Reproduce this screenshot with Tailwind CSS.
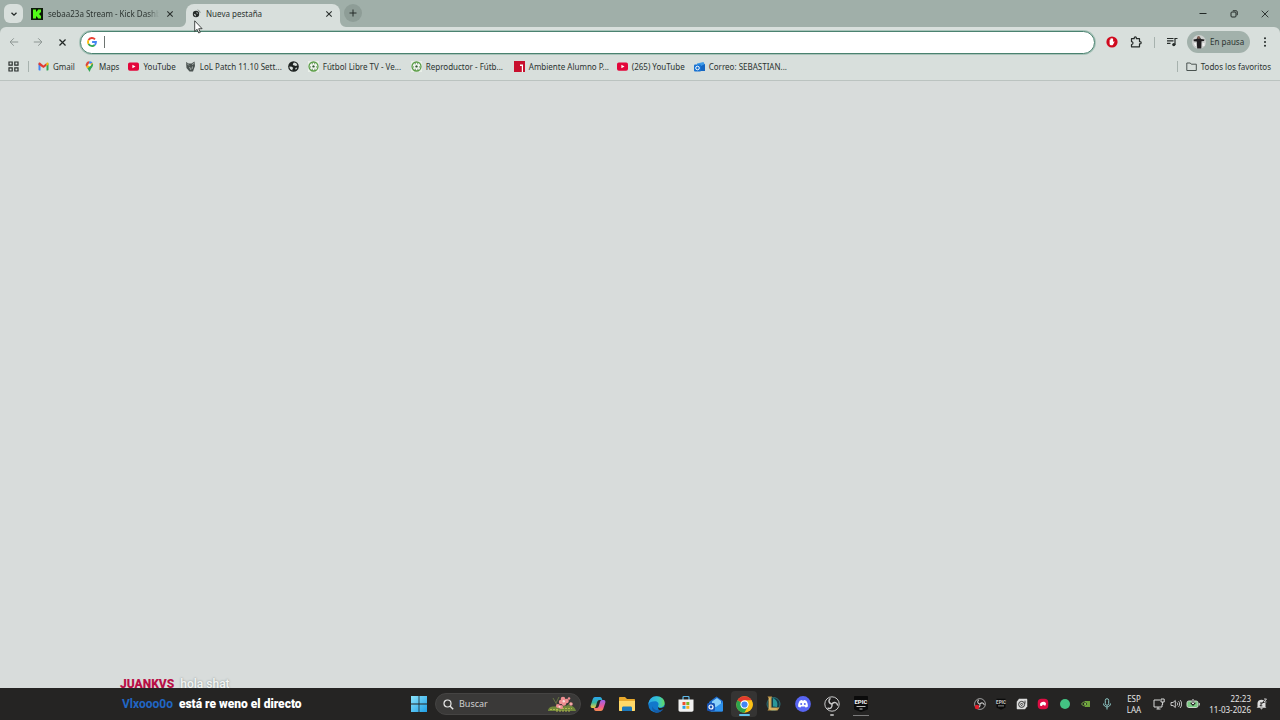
<!DOCTYPE html>
<html lang="es">

<head>
  <meta charset="UTF-8" />
  <meta name="viewport" content="width=device-width, initial-scale=1.0" />
  <script src="https://cdn.jsdelivr.net/npm/@tailwindcss/browser@4"></script>
  <title>Nueva pestaña</title>
</head>

<body class="flex h-screen flex-col overflow-hidden bg-[#d8dcdb] font-['Noto_Sans',sans-serif] text-[8px] leading-3 text-[#2c3431]">

  <!-- shared icons -->
  <svg class="hidden">
    <symbol id="close" viewBox="0 0 8 8"><path d="M1.3 1.3l5.4 5.4M6.7 1.3L1.3 6.7" stroke="currentColor" stroke-width="1.1" fill="none" /></symbol>
    <symbol id="youtube" viewBox="0 0 12 12"><rect x="0" y="1.500" width="12" height="9" rx="2" fill="#e3063a" /><path d="M4.800 4v4L8.200 6z" fill="#fff" /></symbol>
    <symbol id="ball" viewBox="0 0 12 12">
      <rect width="12" height="12" fill="#e9efe9" />
      <circle cx="6" cy="6" r="4.900" fill="#f4f8f2" stroke="#5a9c46" stroke-width="1.400" />
      <path d="M6 4.500l1.400 1-.5 1.700H5.100l-.5-1.700z" fill="#2f5a2c" />
      <path d="M4.200 3h1M6.800 3h1M2.800 6v1M9.200 6v1M4.200 9h1M7 9h1" stroke="#2f5a2c" stroke-width="1" />
    </symbol>
    <symbol id="globe" viewBox="0 0 12 12">
      <circle cx="6" cy="6" r="5.800" fill="#1e2321" />
      <path d="M1.500 6l2.700.200 1.600 1.300-.900 1.300-.200 1.500C2.700 9.600 1.500 8 1.500 6zM6.500 1.500c2 .2 3.300 1.300 3.800 3L8.500 5.500 7 4.800 5.200 4.300 5.800 2.500zM8 7.500l2-.500c-.2 1.200-.8 2-1.700 2.500z" fill="#d8dfdc" />
    </symbol>
    <symbol id="obs" viewBox="0 0 16 16">
      <circle cx="8" cy="8" r="7.200" fill="#201f1f" stroke="#c9c9c9" stroke-width="1" />
      <path d="M7.500 8C4.800 7.300 4.200 4.500 6 2.700M8.300 7.600c2-2 4.700-1 5.200 1.300M8 8.500c.5 2.700-1.500 4.500-4 3.800" stroke="#c9c9c9" stroke-width="1.500" fill="none" stroke-linecap="round" />
    </symbol>
  </svg>

  <!-- tab strip -->
  <header class="bg-[#a0afa9]">
    <div class="flex h-[27px] items-start">
      <button aria-label="Buscar pestañas" class="mt-1 ml-1 flex h-[19px] w-[19px] items-center justify-center rounded-md bg-[#d8dfdc]">
        <svg class="h-2 w-2" viewBox="0 0 8 8"><path d="M1.500 2.800L4 5.200l2.500-2.400" stroke="#222826" stroke-width="1.300" fill="none" /></svg>
      </button>
      <div class="mt-1 flex h-[19px] w-[163px] items-center pl-2">
        <svg class="h-3 w-3 shrink-0" viewBox="0 0 12 12"><rect width="12" height="12" fill="#0c1a08" /><path d="M2 1.500h3v2h1v-1h1v-1h3v3H9v1H8v1h1v1h1v3H7v-1H6v-1H5v2H2z" fill="#53fc18" /></svg>
        <a href="#" class="ml-[5px] w-[111px] whitespace-nowrap mask-r-from-90% mask-r-to-100%">sebaa23a Stream - Kick Dashbo</a>
        <button aria-label="Cerrar sebaa23a Stream" class="ml-[7px] text-[#2a302e]"><svg class="h-2 w-2"><use href="#close" /></svg></button>
      </div>
      <div class="relative mt-1 flex h-[23px] w-[154px] items-center rounded-t-lg bg-[#d8dfdc] pb-1 pl-[6px]">
        <svg class="absolute bottom-0 -left-[6px] h-[6px] w-[6px]" viewBox="0 0 6 6"><path d="M6 0v6H0a6 6 0 0 0 6-6z" fill="#d8dfdc" /></svg>
        <svg class="absolute -right-[6px] bottom-0 h-[6px] w-[6px]" viewBox="0 0 6 6"><path d="M0 0v6h6a6 6 0 0 1-6-6z" fill="#d8dfdc" /></svg>
        <svg class="h-[9px] w-[9px]" viewBox="0 0 9 9"><circle cx="4" cy="5" r="3.200" fill="#252b29" /><path d="M1.800 4.800l1.600.400.500 1.200L3.200 7.500zM4.300 3l1.700.900-1 1z" fill="#d8dfdc" /><path d="M5.500.800A3.500 3.500 0 0 1 8.200 4" stroke="#75807c" stroke-width=".8" fill="none" /></svg>
        <a href="#" class="ml-[5px] flex-1 whitespace-nowrap">Nueva pestaña</a>
        <button aria-label="Cerrar Nueva pestaña" class="mr-[7px] text-[#2a302e]"><svg class="h-2 w-2"><use href="#close" /></svg></button>
      </div>
      <button aria-label="Pestaña nueva" class="mt-1 ml-1 flex h-[18px] w-[18px] items-center justify-center rounded-full bg-[#8e9d97]">
        <svg class="h-2 w-2" viewBox="0 0 8 8"><path d="M4 .5v7M.5 4h7" stroke="#252b29" /></svg>
      </button>
      <div class="ml-auto flex h-[27px] items-stretch text-[#222826]">
        <button aria-label="Minimizar" class="flex w-[31px] items-center justify-center"><svg class="h-2 w-2" viewBox="0 0 8 8"><path d="M.5 3.500h7" stroke="currentColor" /></svg></button>
        <button aria-label="Restaurar" class="flex w-[31px] items-center justify-center"><svg class="h-2 w-2" viewBox="0 0 8 8"><rect x="1" y="2" width="5" height="5" rx="1" stroke="currentColor" fill="none" /><path d="M2.800.700H6A1.300 1.300 0 0 1 7.300 2v3.200" stroke="currentColor" stroke-width=".9" fill="none" /></svg></button>
        <button aria-label="Cerrar" class="flex w-[31px] items-center justify-center"><svg class="h-2 w-2" viewBox="0 0 8 8"><path d="M.7.700l6.600 6.600M7.300.700L.7 7.300" stroke="currentColor" stroke-width=".9" /></svg></button>
      </div>
    </div>

    <!-- toolbar -->
    <div class="flex h-[30px] items-center rounded-t-md bg-[#d8dfdc] pl-[2px]">
      <button aria-label="Atrás" class="flex w-6 justify-center text-[#8d9693]"><svg class="h-[10px] w-[10px]" viewBox="0 0 10 10"><path d="M9.200 5H1.200M4.800 1.300L1.100 5l3.700 3.700" stroke="currentColor" fill="none" /></svg></button>
      <button aria-label="Adelante" class="flex w-6 justify-center text-[#8d9693]"><svg class="h-[10px] w-[10px]" viewBox="0 0 10 10"><path d="M.8 5h8M5.200 1.300L8.900 5 5.200 8.700" stroke="currentColor" fill="none" /></svg></button>
      <button aria-label="Detener" class="flex w-6 justify-center text-[#222826]"><svg class="h-[9px] w-[9px]"><use href="#close" /></svg></button>
      <label class="ml-[6px] flex h-[23px] flex-1 items-center rounded-full border border-[#4b8270] bg-white pl-[6px] shadow-[0_0_0_1px_#a9c4ba]">
        <svg class="h-[10px] w-[10px]" viewBox="0 0 10 10" fill="none" stroke-width="1.800">
          <path d="M8 2.300A4 4 0 0 0 1.500 3.100" stroke="#e94235" />
          <path d="M1.500 3.100a4 4 0 0 0 0 3.800" stroke="#fabb05" />
          <path d="M1.500 6.900A4 4 0 0 0 7.700 8" stroke="#34a853" />
          <path d="M7.700 8A4 4 0 0 0 9 5H5.100" stroke="#4285f4" />
        </svg>
        <span class="ml-[7px] h-3 w-px bg-[#6d7471]"></span>
        <input type="text" aria-label="Buscar con Google o escribir una URL" class="h-full flex-1 bg-transparent outline-none" />
      </label>
      <button aria-label="Bloqueador" class="ml-[5px] flex w-6 justify-center"><svg class="h-3 w-3" viewBox="0 0 12 12"><circle cx="6" cy="6" r="5.600" fill="#d00a1e" /><path d="M3.600 4.200c0-.6.800-.6.800 0V3c0-.6.900-.6.900 0v-.4c0-.6.900-.6.900 0V3c0-.6.900-.6.900 0v3.100l.6-.7c.5-.4 1 0 .7.500L7 8.700c-.6.900-3.400.900-3.400-1z" fill="#fff" /></svg></button>
      <button aria-label="Extensiones" class="flex w-6 justify-center"><svg class="h-3 w-3" viewBox="0 0 12 12"><path d="M1.500 2.700h2.700V2a1.100 1.100 0 0 1 2.200 0v.7h3.100v2.900h.6a1.100 1.100 0 0 1 0 2.200h-.6v3H1.500V8.500c2 0 2-2.900 0-2.900z" stroke="#252b29" stroke-width="1.200" fill="none" stroke-linejoin="round" /></svg></button>
      <span class="mr-[5px] ml-[6px] h-[11px] w-px bg-[#a7b2ae]"></span>
      <button aria-label="Controlar multimedia" class="flex w-6 justify-center"><svg class="h-3 w-3" viewBox="0 0 12 12"><path d="M1 2.500h6.500M1 4.900h6.500M1 7.300h3.500M9 9V2.500h2.500" stroke="#252b29" stroke-width="1.200" fill="none" /><circle cx="7.800" cy="8.600" r="1.600" fill="#252b29" /></svg></button>
      <button class="ml-[3px] flex h-[22px] w-[63px] items-center gap-1 rounded-full bg-[#a2b1ab] pl-[5px] whitespace-nowrap">
        <svg class="h-[14px] w-[14px]" viewBox="0 0 14 14"><circle cx="7" cy="7" r="7" fill="#cdd0ce" /><path d="M1.500 4.500l3-.5 1-1.500h2.500L9 4l3.500.500-.5 1.500-2.500.2-.2 7.300H5.200L4.800 6.500 1.800 6.200z" fill="#201e20" /><circle cx="6.600" cy="2.600" r="1.500" fill="#7b5d52" /><path d="M2 8h2v3H3zM10.500 8h2v3h-2z" fill="#f2f2f1" /></svg>
        En pausa
      </button>
      <button aria-label="Menú" class="flex w-[30px] justify-center"><svg class="h-[10px] w-[10px]" viewBox="0 0 10 10" fill="#222826"><circle cx="5" cy="1.200" r="1" /><circle cx="5" cy="5" r="1" /><circle cx="5" cy="8.800" r="1" /></svg></button>
    </div>

    <!-- bookmarks -->
    <nav class="flex h-6 items-center border-b border-[#bbc3c0] bg-[#d8dfdc] pr-[9px] pb-1 pl-2 whitespace-nowrap">
      <button aria-label="Aplicaciones"><svg class="h-[11px] w-[11px]" viewBox="0 0 11 11" fill="none" stroke="#2a302e" stroke-width="1.200"><path d="M1 1h3.200v3.200H1zM6.800 1H10v3.200H6.800zM1 6.800h3.200V10H1zM6.800 6.800H10V10H6.800z" /></svg></button>
      <span class="ml-[9px] h-[11px] w-px bg-[#a7b2ae]"></span>
      <div class="ml-[9px] flex flex-1 items-center gap-[9px]">
        <a href="#" class="flex items-center gap-1"><svg class="h-[11px] w-[11px]" viewBox="0 0 11 11"><path d="M.5 2.500h2v7H1.300a.8.800 0 0 1-.8-.8z" fill="#4285f4" /><path d="M8.500 2.500h2v6.200a.8.800 0 0 1-.8.800H8.500z" fill="#34a853" /><path d="M.5 2.800c0-1.300 1.200-1.500 2-.8l3 2.400 3-2.400v2.700L5.500 7 .5 3.800z" fill="#e33b30" /><path d="M8.500 2c.8-.7 2-.5 2 .8v.7l-2 1.500z" fill="#fbbc04" /></svg>Gmail</a>
        <a href="#" class="flex items-center gap-1"><svg class="h-[11px] w-[11px]" viewBox="0 0 11 11"><path d="M5.500.3a3.800 3.800 0 0 0-3 1.400L5 4z" fill="#ea4335" /><path d="M5.500.300L4.300 3.500l3.900 0L8.500 1.700A3.800 3.800 0 0 0 5.500.3z" fill="#4285f4" /><path d="M2.500 1.700A3.800 3.800 0 0 0 2.200 6l3-3.300z" fill="#d9483a" /><path d="M2.200 6l1.100 1.400L8.900 2.400l-.4-.7L4 4z" fill="#fbbc04" /><path d="M8.900 2.400C10 5.500 6.500 7 5.900 10.600h-.8C4.900 9.200 4.200 8.400 3.300 7.400z" fill="#34a853" /><circle cx="5.500" cy="3.900" r="1.300" fill="#eef3f1" /></svg>Maps</a>
        <a href="#" class="flex items-center gap-1"><svg class="h-[11px] w-[11px]"><use href="#youtube" /></svg>YouTube</a>
        <a href="#" class="flex items-center gap-1"><svg class="h-[11px] w-[11px]" viewBox="0 0 11 11"><path d="M1 1l2.500 1.500h3L9.500.500 10 5 8 10.500H4.500L1.500 7z" fill="#4b5351" /><path d="M2 2.500l2 2M7 3.500L9 2.500M4.500 6l1.500 3M7.500 5.500L7 8" stroke="#b7c0bd" stroke-width=".8" /></svg><span class="w-[79px]">LoL Patch 11.10 Sett...</span></a>
        <a href="#" aria-label="Sitio web"><svg class="h-[11px] w-[11px]"><use href="#globe" /></svg></a>
        <a href="#" class="flex items-center gap-1"><svg class="h-[11px] w-[11px]"><use href="#ball" /></svg><span class="w-[79px]">Fútbol Libre TV - Ve...</span></a>
        <a href="#" class="flex items-center gap-1"><svg class="h-[11px] w-[11px]"><use href="#ball" /></svg><span class="w-[79px]">Reproductor - Fútb...</span></a>
        <a href="#" class="flex items-center gap-1"><svg class="h-[11px] w-[11px]" viewBox="0 0 11 11"><rect width="11" height="11" fill="#c8102e" /><path d="M6 3.500h3V11H7.800V5H6z" fill="#fff" /></svg><span class="w-[79px]">Ambiente Alumno P...</span></a>
        <a href="#" class="flex items-center gap-1"><svg class="h-[11px] w-[11px]"><use href="#youtube" /></svg>(265) YouTube</a>
        <a href="#" class="flex items-center gap-1"><svg class="h-[11px] w-[11px]" viewBox="0 0 11 11"><path d="M3 2.500L9.500 1l1.500 3v6H3z" fill="#3f9be8" /><path d="M5 6l6-3v7H5z" fill="#1667c2" /><rect y="3.500" width="7" height="7" rx="1" fill="#1873d3" /><circle cx="3.500" cy="7" r="1.800" stroke="#fff" fill="none" /></svg><span>Correo: SEBASTIAN...</span></a>
      </div>
      <span class="mr-2 h-[11px] w-px bg-[#a7b2ae]"></span>
      <a href="#" class="flex items-center gap-1"><svg class="h-[11px] w-[11px]" viewBox="0 0 11 11"><path d="M.8 2h3.500l1 1.200h5v6.300H.8z" stroke="#4a5350" fill="none" stroke-linejoin="round" /></svg>Todos los favoritos</a>
    </nav>
  </header>

  <main class="flex flex-1 flex-col justify-end overflow-hidden">
    <p class="-mb-1 flex gap-[6px] pl-[120px] font-['Roboto',sans-serif] text-xs leading-4">
      <span class="font-black text-[#b80f45]">JUANKVS</span>
      <span class="font-medium text-[#f3f5f4] text-shadow-[0_0_2px_#7d8381]">hola shat</span>
    </p>
  </main>

  <!-- taskbar -->
  <footer class="flex h-8 items-center bg-[#252423] text-[#e6e6e6]">
    <div class="flex-1">
      <p class="flex gap-[6px] pl-[122px] font-['Roboto',sans-serif] text-xs leading-4 whitespace-nowrap">
        <span class="font-bold text-[#2166c4]">Vlxooo0o</span>
        <span class="font-black text-white">está re weno el directo</span>
      </p>
    </div>

    <div class="flex items-center gap-[2px]">
      <button aria-label="Inicio" class="flex w-[29px] justify-center">
        <svg class="h-4 w-4" viewBox="0 0 16 16"><defs><linearGradient id="win" x2="1" y2="1"><stop stop-color="#8be3fb" /><stop offset="1" stop-color="#1f9fe6" /></linearGradient></defs><path d="M0 0h7.600v7.600H0zM8.400 0H16v7.600H8.400zM0 8.400h7.600V16H0zM8.400 8.400H16V16H8.400z" fill="url(#win)" /></svg>
      </button>
      <label class="flex h-[22px] w-[146px] items-center rounded-full border border-[#454443] bg-[#3a3938] pr-[3px] pl-[7px]">
        <svg class="h-[11px] w-[11px] shrink-0" viewBox="0 0 11 11"><circle cx="4.500" cy="4.500" r="3.500" stroke="#e8e8e8" stroke-width="1.200" fill="none" /><path d="M7.200 7.200l3 3" stroke="#e8e8e8" stroke-width="1.400" /></svg>
        <input type="text" placeholder="Buscar" class="ml-[5px] w-0 flex-1 bg-transparent text-[9px] outline-none placeholder:text-[#d0d0d0]" />
        <svg class="h-4 w-[30px]" viewBox="0 0 30 16">
          <path d="M1 15c0-4 4-5 7-4.500C12 9 15 11 18 10c4-2 10 0 11 5z" fill="#71883a" />
          <path d="M3 13.500h9M15 12.500h10M9 15h14" stroke="#b3b84f" stroke-dasharray="2 1" />
          <path d="M6 2l4 7M12 1L9 7M21 4l-6 7M24 6l-5 5" stroke="#6b7b42" stroke-width=".9" />
          <g fill="#ef8f92"><circle cx="16" cy="3" r="2.300" /><circle cx="19.500" cy="5" r="2.300" /><circle cx="14" cy="6" r="2.200" /><circle cx="17" cy="7.500" r="2.200" /><circle cx="11" cy="10" r="2" /><circle cx="14" cy="11" r="2" /><circle cx="24" cy="8" r="1.800" /><circle cx="22" cy="2.500" r="1.300" /></g>
          <g fill="#fbdcd8"><circle cx="16.800" cy="5.200" r="1.200" /><circle cx="12.500" cy="10.800" r="1" /><circle cx="24" cy="8" r=".7" /></g>
        </svg>
      </label>
      <div class="flex w-[293px]">
        <button aria-label="Copilot" class="flex h-8 flex-1 items-center justify-center">
          <svg class="h-4 w-4" viewBox="0 0 16 16"><defs><linearGradient id="cpa" x2="0" y2="1"><stop stop-color="#2ba5ef" /><stop offset=".5" stop-color="#36b6a0" /><stop offset="1" stop-color="#f3ca3e" /></linearGradient><linearGradient id="cpb" x2="0" y2="1"><stop stop-color="#9a63ea" /><stop offset=".6" stop-color="#ee5a96" /><stop offset="1" stop-color="#f58b4d" /></linearGradient></defs><path d="M5 1h5c1.300 0 1.700 1 2 2l.3 1H9.500C8 4 7.500 5 7 6.500L6 10c-.5 1.500-1 2-2.500 2H2.300C.600 12 .300 10.500.800 9l2-6C3.300 1.700 4 1 5 1z" fill="url(#cpa)" /><path d="M11 15H6c-1.300 0-1.700-1-2-2l-.300-1h2.800c1.500 0 2-1 2.500-2.500L10 6c.5-1.500 1-2 2.500-2h1.200c1.700 0 2 1.500 1.500 3l-2 6c-.5 1.300-1.200 2-2.200 2z" fill="url(#cpb)" /></svg>
        </button>
        <button aria-label="Explorador de archivos" class="flex h-8 flex-1 items-center justify-center">
          <svg class="h-4 w-4" viewBox="0 0 16 16"><path d="M0 2c0-.6.400-1 1-1h5l2 2h7c.6 0 1 .400 1 1v10.500H0z" fill="#e9a92c" /><path d="M0 5h16v9c0 .6-.400 1-1 1H1c-.6 0-1-.400-1-1z" fill="#ffd868" /><path d="M3 15v-3c0-1 .600-1.500 1.500-1.500h7c1 0 1.500.600 1.500 1.500v3z" fill="#1c78bb" /></svg>
        </button>
        <button aria-label="Microsoft Edge" class="flex h-8 flex-1 items-center justify-center">
          <svg class="h-[17px] w-[17px]" viewBox="0 0 16 16"><defs><linearGradient id="edge" x2="1"><stop stop-color="#2aa8ec" /><stop offset=".6" stop-color="#37c6cf" /><stop offset="1" stop-color="#63db5f" /></linearGradient></defs><circle cx="8" cy="8" r="7.700" fill="#1278cb" /><path d="M.3 8C.500 3.500 4 .300 8 .300c4.500 0 7.700 3 7.700 6.500 0 2.500-2 4-4.200 4-1.800 0-2.500-.8-2-1.500 1.300-2-.3-4.300-2.800-4.300C3.500 5 1.200 6 .300 8z" fill="url(#edge)" /><path d="M9.500 9.300c-.8 1.200 1 2.300 3 2l3.200-1.300.300 3-3.500.800c-2.500.2-3.500-2-3-4.500z" fill="#252423" /><path d="M14.500 12.300A7.700 7.700 0 0 1 8 15.700c-3-.7-4.500-3-4-6 1 3.300 4.500 5 10.500 2.600z" fill="#155da8" /></svg>
        </button>
        <button aria-label="Microsoft Store" class="flex h-8 flex-1 items-center justify-center">
          <svg class="h-4 w-4" viewBox="0 0 16 16"><path d="M5 4V1.500c0-.6.300-1 1-1h4c.7 0 1 .4 1 1V4" stroke="#5fb9e8" stroke-width="1.200" fill="none" /><path d="M.5 3.500h15V14c0 1-.6 1.700-1.700 1.700H2.200C1.100 15.700.5 15 .5 14z" fill="#f1f1f1" /><path d="M4.500 6h3v3h-3z" fill="#ee4f2b" /><path d="M8.300 6h3v3h-3z" fill="#7bb829" /><path d="M4.500 9.800h3v3h-3z" fill="#2a9fe0" /><path d="M8.300 9.800h3v3h-3z" fill="#f6b420" /></svg>
        </button>
        <button aria-label="Outlook" class="flex h-8 flex-1 items-center justify-center">
          <svg class="h-4 w-4" viewBox="0 0 16 16"><path d="M2 6l7.500-5.500L16 5v9c0 1-.5 1.500-1.500 1.500h-11C2.500 15.500 2 15 2 14z" fill="#1c6ccd" /><path d="M5 5.500l5-3.500 4 3v4l-5 3-4-3z" fill="#8bd0fb" /><path d="M2 8l7 3 7-5v8c0 1-.5 1.500-1.500 1.500H4z" fill="#2e91ec" /><rect y="7" width="8" height="8" rx="1.500" fill="#1a55b5" /><circle cx="4" cy="11" r="2" stroke="#fff" stroke-width="1.200" fill="none" /></svg>
        </button>
        <button aria-label="Google Chrome" class="relative flex h-8 flex-1 items-center justify-center">
          <span class="absolute inset-x-[2px] inset-y-[3px] rounded bg-[#353433]"></span>
          <svg class="relative h-[17px] w-[17px]" viewBox="0 0 16 16"><circle cx="8" cy="8" r="7.800" fill="#fbc116" /><path d="M8 8L1.250 4.100a7.800 7.800 0 0 1 13.500 0z" fill="#e33b2e" /><path d="M1.250 4.100a7.800 7.800 0 0 0 6.750 11.700L11.300 9.900 8 8z" fill="#2da44e" /><path d="M8 4.100h6.750a7.800 7.800 0 0 1 .300 7L8 15.800l3.400-5.900z" fill="#fbc116" /><circle cx="8" cy="8" r="3.900" fill="#fff" /><circle cx="8" cy="8" r="2.900" fill="#4285f4" /></svg>
          <span class="absolute bottom-[4px] h-[2px] w-[11px] rounded-full bg-[#60c3ee]"></span>
        </button>
        <button aria-label="League of Legends" class="flex h-8 flex-1 items-center justify-center">
          <svg class="h-4 w-4" viewBox="0 0 16 16"><circle cx="8.500" cy="8" r="6.500" fill="#123c48" stroke="#2d6f76" /><path d="M8 2c4 2 5 5 4 9l-4-.5z" fill="#2a9799" /><path d="M2.500.500h4.500L6.500 2v9.500h8L12.500 14.500H2.500l1-1.500V2z" fill="#c49a4a" /><path d="M4.800 2v11h7" stroke="#f0d68a" stroke-width=".7" fill="none" /></svg>
        </button>
        <button aria-label="Discord" class="flex h-8 flex-1 items-center justify-center">
          <svg class="h-4 w-4" viewBox="0 0 16 16"><circle cx="8" cy="8" r="7.900" fill="#5865f2" /><path d="M4.700 4.700c1-.6 1.600-.7 2.100-.8l.4.700h1.600l.4-.7c.5.100 1.100.200 2.100.800 1 1.600 1.700 3.500 1.600 5.700-.8.700-1.600 1-2.400 1.200l-.6-1H6.100l-.6 1c-.8-.2-1.600-.5-2.400-1.200-.1-2.200.6-4.100 1.600-5.700z" fill="#fff" /><circle cx="6.200" cy="8" r="1" fill="#5865f2" /><circle cx="9.800" cy="8" r="1" fill="#5865f2" /></svg>
        </button>
        <button aria-label="OBS Studio" class="relative flex h-8 flex-1 items-center justify-center">
          <svg class="h-4 w-4"><use href="#obs" /></svg>
          <span class="absolute bottom-[4px] h-[2px] w-1 rounded-full bg-[#a5a5a5]"></span>
        </button>
        <button aria-label="Epic Games" class="relative flex h-8 flex-1 items-center justify-center">
          <svg class="h-4 w-4" viewBox="0 0 16 16"><path d="M2 0h12c.6 0 1 .400 1 1v11.500c0 .6-.300 1-.8 1.200L8 16l-6.200-2.300c-.5-.2-.8-.6-.8-1.200V1c0-.6.400-1 1-1z" fill="#0b0b0b" /><text x="8" y="8" font-family="Roboto" font-size="6" font-weight="900" text-anchor="middle" fill="#eee">EPIC</text><path d="M3.500 10.500h9M6.500 13h3" stroke="#cfcfcf" stroke-width=".9" /></svg>
          <span class="absolute bottom-[4px] h-px w-4 bg-[#7c7c7c]"></span>
        </button>
      </div>
    </div>

    <div class="flex-1">
      <div class="flex items-center justify-end pr-2">
        <div class="flex w-[149px]">
          <button aria-label="OBS" class="flex flex-1 justify-center"><svg class="h-3 w-3" viewBox="0 0 16 16"><use href="#obs" /><circle cx="4" cy="12" r="3" fill="#e0202c" /></svg></button>
          <button aria-label="Epic Games Launcher" class="flex flex-1 justify-center"><svg class="h-3 w-3" viewBox="0 0 16 16"><path d="M2 1h12v11.500L8 15.500l-6-3z" fill="#0b0b0b" /><text x="8" y="8" font-family="Roboto" font-size="6" font-weight="900" text-anchor="middle" fill="#c4c4c4">EPIC</text><path d="M4 10.500h8" stroke="#b9b9b9" /></svg></button>
          <button aria-label="Roblox" class="flex flex-1 justify-center"><svg class="h-3 w-3" viewBox="0 0 16 16"><path d="M4 1h10c1 0 1 1 1 1v9l-3 4H2c-1 0-1-1-1-1V5z" fill="#dcdcdc" /><circle cx="7.500" cy="8.500" r="4" stroke="#333" stroke-width="1.300" fill="none" /><path d="M6 8.500l1.500-1.800L9 8.500l-1.500 1.800zM12 3.500v4" stroke="#333" stroke-width="1.200" fill="none" /></svg></button>
          <button aria-label="AMD" class="flex flex-1 justify-center"><svg class="h-3 w-3" viewBox="0 0 16 16"><rect x="1" y="1" width="14" height="14" rx="5" fill="#dc0d43" /><path d="M4 8.500c0-4 7-5 8-1.500l-.5 3H9.500L8 8.500 6.500 10.500H4.500z" fill="#fff" /></svg></button>
          <button aria-label="En línea" class="flex flex-1 justify-center"><svg class="h-3 w-3" viewBox="0 0 12 12"><circle cx="6" cy="6" r="5" fill="#43c383" /></svg></button>
          <button aria-label="NVIDIA" class="flex flex-1 justify-center"><svg class="h-3 w-3" viewBox="0 0 12 12"><path d="M5 3h5v6H5z" fill="#6da23a" /><path d="M1.500 6c1.500-2.500 5-3 6.500 0C6.500 8.500 3 8.500 1.500 6z" fill="#252423" stroke="#80b94a" stroke-width=".9" /><circle cx="5.200" cy="6" r="1.200" fill="#80b94a" /></svg></button>
          <button aria-label="Micrófono" class="flex flex-1 justify-center"><svg class="h-3 w-3" viewBox="0 0 12 12" fill="none" stroke="#8fc9c8"><rect x="4.300" y=".7" width="3.400" height="6.600" rx="1.700" /><path d="M2.500 5.500c0 4.500 7 4.500 7 0M6 9v2.500" /></svg></button>
        </div>
        <button class="w-8 text-center text-[8px] leading-[11px]">ESP<br />LAA</button>
        <button aria-label="Red, volumen y batería" class="flex">
          <span class="flex w-[17px] justify-center"><svg class="h-3 w-3" viewBox="0 0 12 12" fill="none" stroke="#d8d8d8"><path d="M7 2H1v7h8V6.500M3.500 11h4M5 9v2M8 1h3.200v3H8zM9.600 4v3" /></svg></span>
          <span class="flex w-[17px] justify-center"><svg class="h-3 w-3" viewBox="0 0 12 12" fill="none" stroke="#d8d8d8" stroke-width=".9"><path d="M1 4.500h2L5.300 2.500v7L3 7.500H1zM7 4.500c.8.800.8 2.200 0 3M8.500 3.200c1.600 1.500 1.600 4.100 0 5.600M10 2c2.200 2.200 2.200 5.800 0 8" /></svg></span>
          <span class="flex w-[17px] justify-center"><svg class="h-3 w-[14px]" viewBox="0 0 14 12"><rect x="1" y="3" width="11" height="6.500" rx="1.800" fill="#79c982" stroke="#c9d8c9" /><path d="M13.300 5v2.500" stroke="#c9d8c9" /><path d="M7 0v6M5 4.500l2 2 2-2" stroke="#252423" stroke-width="2" fill="none" /><path d="M7 1v5M5.500 4.500L7 6l1.500-1.500" stroke="#e8e8e8" fill="none" /></svg></span>
        </button>
        <button class="w-[50px] text-right text-[8px] leading-[11px] whitespace-nowrap">22:23<br />11-03-2026</button>
        <button aria-label="Notificaciones" class="flex w-[21px] justify-center"><svg class="h-3 w-3" viewBox="0 0 12 12"><path d="M1.500 9V5c0-4.500 8-4.500 8 0v4l1 .8H.5zM4 10.300h3L5.500 11.500z" fill="#dedede" /><path d="M4 5h2.300L4 7.800h2.300" stroke="#252423" fill="none" /><path d="M8 1h2.500L8 4h2.500" stroke="#252423" stroke-width="2" fill="none" /><path d="M8 1h2.500L8 4h2.500" stroke="#dedede" stroke-width=".9" fill="none" /></svg></button>
      </div>
    </div>
  </footer>

  <!-- mouse pointer -->
  <svg class="pointer-events-none absolute top-[20px] left-[194px] h-[14px] w-[9px]" viewBox="0 0 9 14"><path d="M.7.800v10.700l2.400-2.200 1.600 3.700 1.600-.7-1.600-3.600h3.400z" fill="#fff" stroke="#1e2321" stroke-width=".8" /></svg>
</body>

</html>
